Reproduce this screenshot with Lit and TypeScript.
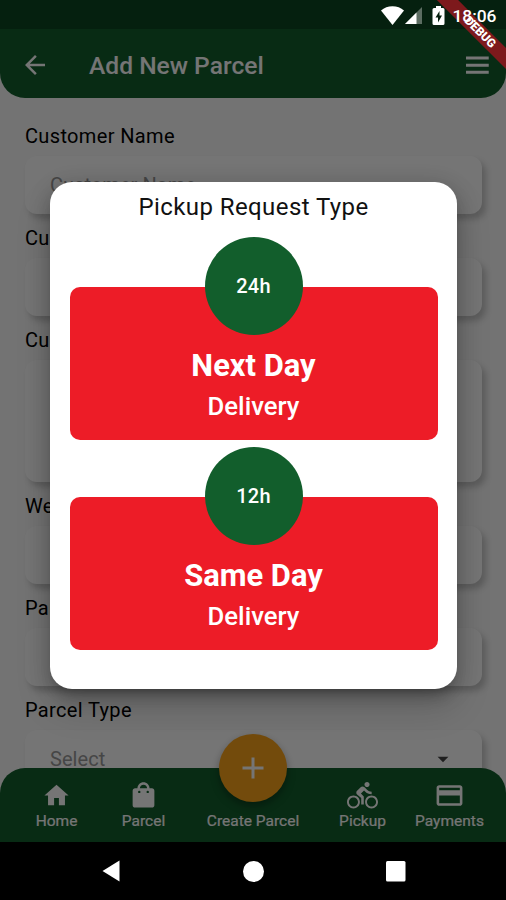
import { LitElement, html, css, svg } from "lit";
import { customElement, property } from "lit/decorators.js";

const icons = {
  back: svg`<path d="M20 11H7.83l5.59-5.59L12 4l-8 8 8 8 1.41-1.41L7.83 13H20v-2z"/>`,
  menu: svg`<path d="M2.500 4.500h18.800v2.500h-18.800zM2.500 10.500h18.800v2.500h-18.800zM2.500 16.300h18.800v2.500h-18.800z"/>`,
  home: svg`<path d="M10 20v-6h4v6h5v-8h3L12 3 2 12h3v8z"/>`,
  bag: svg`<path d="M19 6h-2c0-2.76-2.24-5-5-5S7 3.240 7 6H5c-1.100 0-1.990.9-1.990 2L3 20c0 1.100.9 2 2 2h14c1.100 0 2-.9 2-2V8c0-1.100-.9-2-2-2zM9.500 9a1 1 0 1 1-2 0a1 1 0 0 1 2 0zM16.500 9a1 1 0 1 1-2 0a1 1 0 0 1 2 0zM9 6c0-1.660 1.340-3 3-3s3 1.340 3 3z" fill-rule="evenodd"/>`,
  bike: svg`<path d="M15.500 5.500c1.100 0 2-.9 2-2s-.9-2-2-2-2 .9-2 2 .9 2 2 2zM5 12c-2.800 0-5 2.200-5 5s2.200 5 5 5 5-2.200 5-5-2.200-5-5-5zm0 8.500c-1.900 0-3.500-1.600-3.500-3.500s1.600-3.500 3.500-3.500 3.500 1.600 3.500 3.500-1.600 3.500-3.500 3.500zm5.800-10l2.400-2.400.8.8c1.300 1.300 3 2.100 5.100 2.100V9c-1.500 0-2.700-.6-3.600-1.500l-1.900-1.900c-.5-.4-1-.6-1.600-.6s-1.100.2-1.400.6L7.800 8.400c-.4.4-.6.9-.6 1.400 0 .6.200 1.100.6 1.400L11 14v5h2v-6.200l-2.200-2.300zM19 12c-2.800 0-5 2.200-5 5s2.200 5 5 5 5-2.200 5-5-2.200-5-5-5zm0 8.500c-1.900 0-3.500-1.600-3.500-3.500s1.600-3.500 3.500-3.500 3.500 1.600 3.500 3.500-1.600 3.500-3.500 3.500z"/>`,
  card: svg`<path d="M20 4H4c-1.110 0-1.990.89-1.990 2L2 18c0 1.110.89 2 2 2h16c1.110 0 2-.89 2-2V6c0-1.110-.89-2-2-2zm0 14H4v-6h16v6zm0-10H4V6h16v2z"/>`,
  plus: svg`<path d="M19 13h-6v6h-2v-6H5v-2h6V5h2v6h6v2z"/>`,
  drop: svg`<path d="M7 10l5 5 5-5z"/>`,
};

@customElement("delivery-option")
class DeliveryOption extends LitElement {
  @property() hours = "";
  @property() name = "";

  static styles = css`
    :host { display: block; padding-top: 50px; }
    .box {
      height: 153px;
      border-radius: 10px;
      background: #ed1c27;
      color: #fff;
      display: flex;
      flex-direction: column;
      align-items: center;
    }
    .badge {
      width: 98px;
      height: 98px;
      margin-top: -50px;
      border-radius: 50%;
      background: #125e2c;
      display: flex;
      align-items: center;
      justify-content: center;
      font-size: 20px;
      font-weight: 500;
      letter-spacing: 0.3px;
      flex: none;
    }
    .name { margin-top: 13px; font-size: 30.9px; line-height: 36px; font-weight: 700; }
    .kind { margin-top: 6px; font-size: 25.7px; line-height: 32px; font-weight: 500; }
  `;

  render() {
    return html`<div class="box">
      <div class="badge">${this.hours}</div>
      <div class="name">${this.name}</div>
      <div class="kind">Delivery</div>
    </div>`;
  }
}

@customElement("app-root")
class AppRoot extends LitElement {
  static styles = css`
    :host {
      display: block;
      position: relative;
      width: 506px;
      height: 900px;
      overflow: hidden;
      font-family: Roboto, "Liberation Sans", sans-serif;
      background: #000;
    }
    svg { display: block; fill: currentColor; flex: none; }
    .screen { height: 842px; background: #fafafa; display: flex; flex-direction: column; }
    .header { flex: none; background: #125e2c; color: #fff; border-radius: 0 0 25px 25px; overflow: hidden; }
    .strip { height: 29px; background: rgba(0, 0, 0, 0.25); }
    .bar { height: 69px; display: flex; align-items: center; padding: 3px 14px 0 20px; box-sizing: border-box; }
    .bar h1 { flex: 1; margin: 0 0 0 39px; font-size: 24.6px; font-weight: 500; }
    .form { flex: 1; min-height: 0; overflow: hidden; padding: 23px 24px 0 25px; margin-bottom: -25px; }
    .label { height: 30px; line-height: 30px; font-size: 20px; letter-spacing: 0.35px; color: #000; }
    .field {
      height: 58px;
      box-sizing: border-box;
      margin: 5px 0 9px;
      padding: 0 26px 0 25px;
      border-radius: 12px;
      background: #fff;
      box-shadow: 4px 5px 6px rgba(0, 0, 0, 0.2);
      display: flex;
      align-items: center;
      justify-content: space-between;
      font-size: 20px;
      letter-spacing: 0.05px;
      color: #999;
    }
    .field.tall { height: 122px; }
    .field svg { color: #444; }
    .tabs {
      position: relative;
      flex: none;
      height: 74px;
      box-sizing: border-box;
      padding: 13px 0 0 13px;
      background: #125e2c;
      color: #fff;
      border-radius: 25px 25px 0 0;
      display: flex;
      align-items: flex-start;
      font-size: 15.5px;
      -webkit-text-stroke: 0.2px currentColor;
    }
    .tab { width: 87px; display: flex; flex-direction: column; align-items: center; white-space: nowrap; }
    .tab.mid { width: 132px; }
    .tab span { line-height: 20px; margin-top: 2px; }
    .icon { height: 28px; display: flex; align-items: center; }
    .fab {
      width: 68px;
      height: 68px;
      margin-top: -47px;
      margin-bottom: 7px;
      border-radius: 50%;
      background: #fba41b;
      display: flex;
      align-items: center;
      justify-content: center;
      box-shadow: 0 4px 8px rgba(0, 0, 0, 0.35);
    }
    .scrim { position: absolute; inset: 0 0 58px; background: rgba(0, 0, 0, 0.54); }
    .dialog {
      position: absolute;
      left: 50px;
      top: 182px;
      width: 407px;
      height: 507px;
      box-sizing: border-box;
      padding: 8px 19.5px 0 19.5px;
      border-radius: 22px;
      background: #fff;
      box-shadow: 0 10px 14px -5px rgba(0, 0, 0, 0.22), 0 18px 34px 2px rgba(0, 0, 0, 0.14), 0 4px 20px 4px rgba(0, 0, 0, 0.12);
      display: flex;
      flex-direction: column;
    }
    .title { text-align: center; font-size: 24px; line-height: 34px; letter-spacing: 0.42px; color: #111; margin-bottom: 13px; }
    .options { display: flex; flex-direction: column; gap: 7px; }
    .ribbon {
      position: absolute;
      left: 420px;
      top: 25px;
      width: 120px;
      height: 15px;
      background: #7d191c;
      color: #fff;
      transform: rotate(45deg);
      font-size: 12px;
      line-height: 15px;
      font-weight: 900;
      text-align: center;
    }
    .status {
      position: absolute;
      top: 0;
      right: 9.5px;
      height: 30px;
      display: flex;
      align-items: center;
      color: #fff;
      font-size: 17.4px;
      font-weight: 500;
    }
    .time { margin-left: 6px; padding-top: 2px; }
    .system { height: 58px; display: flex; align-items: center; justify-content: space-between; padding: 0 100px 0 102px; box-sizing: border-box; color: #fff; }
  `;

  icon(name: keyof typeof icons, size: number) {
    return html`<svg width=${size} height=${size} viewBox="0 0 24 24">${icons[name]}</svg>`;
  }

  field(label: string, hint = "", tall = false, menu = false) {
    return html`<div class="label">${label}</div>
      <div class="field ${tall ? "tall" : ""}"><span>${hint}</span>${menu ? this.icon("drop", 26) : ""}</div>`;
  }

  tab(name: keyof typeof icons, label: string, size = 29) {
    return html`<div class="tab"><div class="icon">${this.icon(name, size)}</div><span>${label}</span></div>`;
  }

  render() {
    return html`
      <div class="screen">
        <div class="header">
          <div class="strip"></div>
          <div class="bar">${this.icon("back", 30)}<h1>Add New Parcel</h1>${this.icon("menu", 29)}</div>
        </div>
        <div class="form">
          ${this.field("Customer Name", "Customer Name")}
          ${this.field("Customer Phone")}
          ${this.field("Customer Address", "", true)}
          ${this.field("Weight")}
          ${this.field("Parcel Price")}
          ${this.field("Parcel Type", "Select", false, true)}
        </div>
        <div class="tabs">
          ${this.tab("home", "Home")}
          ${this.tab("bag", "Parcel", 29)}
          <div class="tab mid"><div class="fab">${this.icon("plus", 36)}</div><span>Create Parcel</span></div>
          ${this.tab("bike", "Pickup", 31)}
          ${this.tab("card", "Payments", 31)}
        </div>
      </div>
      <div class="system">
        <svg width="18" height="22" viewBox="0 0 18 22"><path d="M0.500 11L17.500 0.500V21.500Z"/></svg>
        <svg width="21" height="21" viewBox="0 0 21 21"><circle cx="10.500" cy="10.500" r="10.500"/></svg>
        <svg width="20" height="21" viewBox="0 0 20 21"><rect width="19.500" height="20.500" rx="1.500"/></svg>
      </div>
      <div class="scrim"></div>
      <div class="ribbon">DEBUG</div>
      <div class="status">
        <svg width="23" height="19" viewBox="0 0 23 19"><path d="M0 4.500C6-1.300 17-1.300 23 4.500L11.500 19Z"/></svg>
        <svg width="19" height="19" viewBox="0 0 19 19"><path d="M18 1V18H1Z" opacity=".35"/><path d="M12.500 6.500V18H1Z"/></svg>
        <svg width="23" height="19" viewBox="0 0 23 19"><path fill-rule="evenodd" d="M13 2V0h5v2h2q1.500 0 1.500 1.500v14q0 1.500-1.500 1.500h-9q-1.500 0-1.500-1.500v-14q0-1.500 1.500-1.500zM16.500 5L12.500 11.500H15V16.500L19 9.500H16.500Z"/></svg>
        <span class="time">18:06</span>
      </div>
      <div class="dialog">
        <div class="title">Pickup Request Type</div>
        <div class="options">
          <delivery-option hours="24h" name="Next Day"></delivery-option>
          <delivery-option hours="12h" name="Same Day"></delivery-option>
        </div>
      </div>
    `;
  }
}
